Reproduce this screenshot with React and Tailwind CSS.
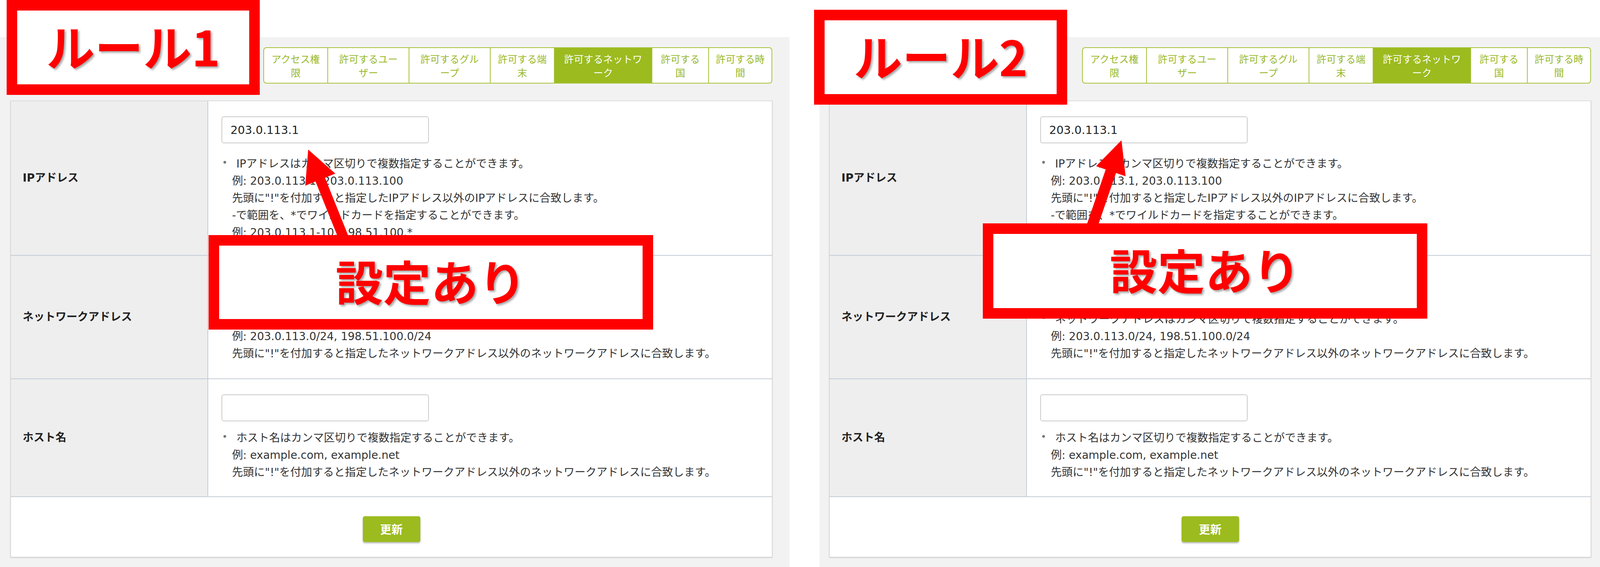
import React from 'react'
import clsx from 'clsx'

const tabs = [
  { a: 'アクセス権', b: '限', w: 'w-[162px]' },
  { a: '許可するユー', b: 'ザー', w: 'w-[208px]' },
  { a: '許可するグル', b: 'ープ', w: 'w-[208px]' },
  { a: '許可する端', b: '末', w: 'w-[164px]' },
  { a: '許可するネットワ', b: 'ーク', w: 'w-[250px]' },
  { a: '許可する', b: '国', w: 'w-[145px]' },
  { a: '許可する時', b: '間', w: 'w-[162px]' },
]

const rows = [
  {
    label: 'IPアドレス',
    value: '203.0.113.1',
    pad: 'pt-[39px] pb-[35px]',
    gap: 'mt-[31px]',
    lines: [
      'IPアドレスはカンマ区切りで複数指定することができます。',
      '例: 203.0.113.1, 203.0.113.100',
      '先頭に"!"を付加すると指定したIPアドレス以外のIPアドレスに合致します。',
      '-で範囲を、*でワイルドカードを指定することができます。',
      '例: 203.0.113.1-10, 198.51.100.*',
    ],
  },
  {
    label: 'ネットワークアドレス',
    value: '',
    pad: 'pt-[40px] pb-[41px]',
    gap: 'mt-[32px]',
    lines: [
      'ネットワークアドレスはカンマ区切りで複数指定することができます。',
      '例: 203.0.113.0/24, 198.51.100.0/24',
      '先頭に"!"を付加すると指定したネットワークアドレス以外のネットワークアドレスに合致します。',
    ],
  },
  {
    label: 'ホスト名',
    value: '',
    pad: 'pt-[39px] pb-[39px]',
    gap: 'mt-[21px]',
    lines: [
      'ホスト名はカンマ区切りで複数指定することができます。',
      '例: example.com, example.net',
      '先頭に"!"を付加すると指定したネットワークアドレス以外のネットワークアドレスに合致します。',
    ],
  },
]

const Tabs = () => {
  return (
    <div className='flex justify-end'>
      <div className='flex h-[93px] rounded-[8px] border-2 border-[#a6c33c] bg-white overflow-hidden [font-family:"Noto_Sans_CJK_JP",sans-serif]'>
        {tabs.map((t, i) => (
          <div
            key={i}
            className={clsx(
              'flex flex-col items-center justify-center text-[25px] leading-[35px] whitespace-nowrap',
              t.w,
              i > 0 && 'border-l-2 border-[#a6c33c]',
              i === 4 ? 'bg-[#9cbb1f] text-white' : 'text-[#98b829]'
            )}
          >
            <span>{t.a}</span>
            <span>{t.b}</span>
          </div>
        ))}
      </div>
    </div>
  )
}

const Row = ({ row }) => {
  const [first, ...rest] = row.lines
  return (
    <div className='flex border-b-2 border-[#c4cdd6]'>
      <div className='w-[505px] shrink-0 bg-[#eeeeee] border-r-2 border-[#c4cdd6] flex items-center pl-[30px] text-[28px] font-bold text-[#222]'>
        {row.label}
      </div>
      <div className={clsx('flex-1 pl-[34px]', row.pad)}>
        <input
          readOnly
          defaultValue={row.value}
          className='block w-[531px] h-[69px] rounded-[6px] border-2 border-[#cbcbcb] bg-white pl-[21px] text-[29px] text-[#222] outline-none'
        />
        <div className={clsx('pl-[27px] text-[28px] leading-[44px] text-[#333] whitespace-nowrap', row.gap)}>
          <div className='-ml-[27px] flex items-center'>
            <span className='w-[38px] flex pl-[5px]'>
              <span className='w-[7px] h-[7px] rounded-full bg-[#777] mb-[10px]' />
            </span>
            <span>{first}</span>
          </div>
          {rest.map((l, i) => (
            <div key={i}>{l}</div>
          ))}
        </div>
      </div>
    </div>
  )
}

const Panel = ({ width, pad }) => {
  return (
    <div className={clsx('flex flex-col shrink-0', width)}>
      <div className='h-[95px] bg-white' />
      <div className={clsx('flex-1 bg-[#f2f2f2] pt-[26px]', pad)}>
        <Tabs />
        <div className='mt-[44px] bg-white border border-[#cfcfcf] shadow-[0_1px_3px_rgba(0,0,0,0.2)]'>
          {rows.map((r, i) => (
            <Row key={i} row={r} />
          ))}
          <div className='flex justify-center pt-[49px] pb-[38px]'>
            <button className='w-[147px] h-[66px] rounded-[5px] bg-[#9cbb1f] text-white text-[29px] font-bold shadow-[0_3px_4px_rgba(0,0,0,0.3)] [font-family:"Noto_Sans_CJK_JP",sans-serif]'>
              更新
            </button>
          </div>
        </div>
      </div>
    </div>
  )
}

const RedBox = ({ pos, size, children }) => {
  return (
    <div className={clsx('absolute border-[27px] border-[#ff0000] bg-white flex items-center justify-center', pos)}>
      <span
        className={clsx(
          'leading-none font-bold text-[#ff0000] whitespace-nowrap pb-[12px] [text-shadow:4px_4px_5px_rgba(0,0,0,0.35)] [font-family:"Noto_Sans_CJK_JP",sans-serif]',
          size
        )}
      >
        {children}
      </span>
    </div>
  )
}

export default function App() {
  return (
    <div className='relative w-[4118px] h-[1452px] overflow-hidden bg-white flex [font-family:"DejaVu_Sans","Noto_Sans_CJK_JP",sans-serif]'>
      <Panel width='w-[2021px]' pad='pl-[27px] pr-[44px]' />
      <div className='w-[77px] shrink-0 bg-white' />
      <Panel width='w-[2020px]' pad='pl-[25px] pr-[45px]' />

      {/* annotations */}
      <svg className='absolute left-0 top-0 pointer-events-none' width='4118' height='1452' viewBox='0 0 4118 1452'>
        <polygon
          fill='#ff0000'
          points='868.1,615.1 807.8,464.8 781.4,475.5 789,383 858.4,444.5 832,455.2 892.3,605.5'
        />
        <polygon
          fill='#ff0000'
          points='2780.6,579.8 2830.6,433.9 2806,425.4 2871,359 2881.6,451.4 2857,442.9 2807,588.8'
        />
      </svg>
      <RedBox pos='left-[17px] top-0 w-[648px] h-[243px]' size='text-[124px]'>ルール1</RedBox>
      <RedBox pos='left-[2084px] top-[25px] w-[648px] h-[243px]' size='text-[124px]'>ルール2</RedBox>
      <RedBox pos='left-[534px] top-[602px] w-[1138px] h-[242px]' size='text-[122px]'>設定あり</RedBox>
      <RedBox pos='left-[2516px] top-[572px] w-[1138px] h-[244px]' size='text-[122px]'>設定あり</RedBox>
    </div>
  )
}
